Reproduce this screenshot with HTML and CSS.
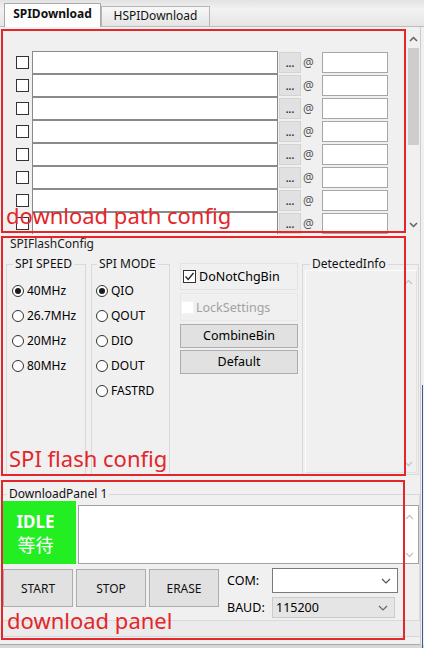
FILE: index.html
```html
<!DOCTYPE html>
<html>
<head>
<meta charset="utf-8">
<link rel="stylesheet" href="styles.css">
</head>
<body>
<div class="win">
  <div class="tabbar">
    <div class="tab active">SPIDownload</div>
    <div class="tab">HSPIDownload</div>
  </div>
  <div class="page">
    <section class="paths">
      <div class="pathlist">
        <div class="prow"><span class="cb"></span><span class="path"></span><span class="dots">...</span><span class="at">@</span><span class="addr"></span></div>
        <div class="prow"><span class="cb"></span><span class="path"></span><span class="dots">...</span><span class="at">@</span><span class="addr"></span></div>
        <div class="prow"><span class="cb"></span><span class="path"></span><span class="dots">...</span><span class="at">@</span><span class="addr"></span></div>
        <div class="prow"><span class="cb"></span><span class="path"></span><span class="dots">...</span><span class="at">@</span><span class="addr"></span></div>
        <div class="prow"><span class="cb"></span><span class="path"></span><span class="dots">...</span><span class="at">@</span><span class="addr"></span></div>
        <div class="prow"><span class="cb"></span><span class="path"></span><span class="dots">...</span><span class="at">@</span><span class="addr"></span></div>
        <div class="prow"><span class="cb"></span><span class="path"></span><span class="dots">...</span><span class="at">@</span><span class="addr"></span></div>
        <div class="prow"><span class="cb"></span><span class="path"></span><span class="dots">...</span><span class="at">@</span><span class="addr"></span></div>
      </div>
      <div class="vscroll">
        <div class="sbtn"><svg width="9" height="6" viewBox="0 0 9 6"><path d="M1 5 L4.5 1.5 L8 5" fill="none" stroke="#606060" stroke-width="1.5"/></svg></div>
        <div class="thumb"></div>
        <div class="track"></div>
        <div class="sbtn"><svg width="9" height="6" viewBox="0 0 9 6"><path d="M1 1 L4.5 4.5 L8 1" fill="none" stroke="#606060" stroke-width="1.5"/></svg></div>
      </div>
    </section>

    <section class="flash">
      <div class="flash-title">SPIFlashConfig</div>
      <div class="flash-body">
        <fieldset class="grp speed">
          <legend>SPI SPEED</legend>
          <div class="radios">
            <div class="ritem"><span class="rb on"></span><span>40MHz</span></div>
            <div class="ritem"><span class="rb"></span><span>26.7MHz</span></div>
            <div class="ritem"><span class="rb"></span><span>20MHz</span></div>
            <div class="ritem"><span class="rb"></span><span>80MHz</span></div>
          </div>
        </fieldset>
        <fieldset class="grp mode">
          <legend>SPI MODE</legend>
          <div class="radios">
            <div class="ritem"><span class="rb on"></span><span>QIO</span></div>
            <div class="ritem"><span class="rb"></span><span>QOUT</span></div>
            <div class="ritem"><span class="rb"></span><span>DIO</span></div>
            <div class="ritem"><span class="rb"></span><span>DOUT</span></div>
            <div class="ritem"><span class="rb"></span><span>FASTRD</span></div>
          </div>
        </fieldset>
        <div class="opts">
          <div class="panel">
            <span class="cb chk"><svg width="11" height="11" viewBox="0 0 11 11"><path d="M1.5 5.5 L4.2 8.5 L9.5 2" fill="none" stroke="#222" stroke-width="1.3"/></svg></span>
            <span class="plabel">DoNotChgBin</span>
          </div>
          <div class="panel dis">
            <span class="cb off"></span>
            <span class="plabel grey">LockSettings</span>
          </div>
          <div class="btn">CombineBin</div>
          <div class="btn second">Default</div>
        </div>
        <fieldset class="grp detected">
          <legend>DetectedInfo</legend>
          <div class="info">
            <div class="farrows">
              <svg width="9" height="6" viewBox="0 0 9 6"><path d="M1 5 L4.5 1.5 L8 5" fill="none" stroke="#c4c4c4" stroke-width="1.3"/></svg>
              <svg width="9" height="6" viewBox="0 0 9 6"><path d="M1 1 L4.5 4.5 L8 1" fill="none" stroke="#c4c4c4" stroke-width="1.3"/></svg>
            </div>
          </div>
        </fieldset>
      </div>
    </section>

    <section class="dl">
      <fieldset class="dlgrp">
        <legend>DownloadPanel 1</legend>
        <div class="dl-top">
          <div class="status"><span class="idle">IDLE</span><span class="wait">等待</span></div>
          <div class="log">
            <div class="farrows logar">
              <svg width="9" height="6" viewBox="0 0 9 6"><path d="M1 5 L4.5 1.5 L8 5" fill="none" stroke="#c4c4c4" stroke-width="1.3"/></svg>
              <svg width="9" height="6" viewBox="0 0 9 6"><path d="M1 1 L4.5 4.5 L8 1" fill="none" stroke="#c4c4c4" stroke-width="1.3"/></svg>
            </div>
          </div>
        </div>
        <div class="dl-bot">
          <div class="dbtn">START</div>
          <div class="dbtn">STOP</div>
          <div class="dbtn">ERASE</div>
          <div class="port">
            <span class="plab com-l">COM:</span>
            <div class="combo com"><span></span><svg width="10" height="6" viewBox="0 0 10 6"><path d="M1 1 L5 5 L9 1" fill="none" stroke="#555" stroke-width="1.2"/></svg></div>
            <span class="plab baud-l">BAUD:</span>
            <div class="combo baud"><span>115200</span><svg width="10" height="6" viewBox="0 0 10 6"><path d="M1 1 L5 5 L9 1" fill="none" stroke="#666" stroke-width="1.2"/></svg></div>
          </div>
        </div>
      </fieldset>
      <div class="band"></div>
    </section>
  </div>
  <div class="bottom"></div>

  <div class="anno a1"><span>download path config</span></div>
  <div class="anno a2"><span>SPI flash config</span></div>
  <div class="anno a3"><span>download panel</span></div>
  <div class="edge"></div>
</div>
</body>
</html>
```
FILE: styles.css
```css
* { box-sizing: border-box; }

body {
  margin: 0;
  background: #f0f0f0;
  font-family: "Noto Sans", "Noto Sans CJK SC", sans-serif;
  font-size: 12px;
  color: #000;
  width: 424px;
  height: 648px;
  overflow: hidden;
}

.win {
  position: relative;
  width: 424px;
  height: 648px;
}

/* tabs */
.tabbar {
  height: 27px;
  display: flex;
  align-items: flex-end;
  padding-left: 4px;
  background: linear-gradient(#e2e2e2, #f2f2f2 35%, #e5e5e5);
  border-bottom: 1px solid #bcbcbc;
}
.tab {
  width: 109px;
  height: 20px;
  text-align: center;
  line-height: 18px;
  border: 1px solid #b6b6b6;
  border-bottom: none;
  background: linear-gradient(#f8f8f8, #e4e4e4);
  color: #111;
}
.tab.active {
  width: 97px;
  height: 24px;
  line-height: 20px;
  background: #fdfdfd;
  border-color: #a9a9a9;
  font-weight: bold;
  margin-bottom: -1px;
}

.page {
  width: 421px;
  height: 618px;
  border-right: 1px solid #cdcdcd;
  border-bottom: 1px solid #a9a9a9;
}

/* path rows */
.paths {
  display: flex;
  height: 207px;
}
.pathlist {
  width: 406px;
  height: 207px;
  padding-top: 24px;
  overflow: hidden;
}
.prow {
  display: flex;
  align-items: center;
  height: 23px;
}
.cb {
  width: 13px;
  height: 13px;
  border: 1px solid #333;
  background: #fff;
  flex: none;
}
.prow .cb {
  margin-left: 16px;
  margin-right: 3px;
}
.path {
  width: 246px;
  height: 23px;
  border: 1px solid #8a8a8a;
  background: #fff;
}
.dots {
  width: 22px;
  height: 21px;
  margin-left: 1px;
  background: #e1e1e1;
  border: 1px solid #d3d3d3;
  font-size: 10px;
  font-weight: bold;
  color: #333;
  text-align: center;
  line-height: 20px;
}
.at {
  width: 21px;
  padding-left: 2px;
  color: #555;
  font-size: 12px;
}
.addr {
  width: 66px;
  height: 21px;
  border: 1px solid #a6a6a6;
  background: #fff;
}

.vscroll {
  width: 14px;
  margin-top: 3px;
  display: flex;
  flex-direction: column;
  align-items: center;
}
.sbtn {
  height: 18px;
  width: 14px;
  display: flex;
  align-items: center;
  justify-content: center;
}
.thumb {
  width: 11px;
  height: 97px;
  background: #cdcdcd;
}
.track { flex: 1; }

/* SPI flash config */
.flash {
  height: 244px;
  padding-top: 2px;
}
.flash-title {
  padding-left: 10px;
  height: 16px;
  line-height: 16px;
  color: #222;
}
.flash-body {
  display: flex;
  margin-top: 4px;
  height: 219px;
  padding-left: 6px;
}
.grp {
  margin: 0;
  padding: 0;
  min-width: 0;
  height: 219px;
  border: 1px solid #d9d9d9;
  flex: none;
}
.grp legend, .dlgrp legend {
  padding: 0 2px;
  margin-left: 6px;
  line-height: 16px;
  font-size: 12px;
  color: #111;
}
.speed { width: 80px; }
.mode { width: 79px; margin-left: 5px; }
.mode legend { margin-left: 5px; }
.radios { padding: 6px 0 0 5px; }
.mode .radios { padding-left: 4px; }
.ritem {
  display: flex;
  align-items: center;
  height: 25px;
  gap: 3px;
}
.rb {
  width: 12px;
  height: 12px;
  border: 1px solid #333;
  border-radius: 50%;
  background: #fff;
  display: flex;
  align-items: center;
  justify-content: center;
  flex: none;
}
.rb.on::after {
  content: "";
  width: 6px;
  height: 6px;
  border-radius: 50%;
  background: #1a1a1a;
}

.opts {
  width: 132px;
  padding: 7px 0 0 10px;
  flex: none;
}
.panel {
  width: 118px;
  height: 27px;
  border: 1px solid #e3e3e3;
  display: flex;
  align-items: center;
}
.panel .chk {
  margin-left: 2px;
  display: flex;
  align-items: center;
  justify-content: center;
}
.plabel {
  margin-left: 3px;
  font-size: 12.5px;
}
.panel.dis {
  height: 28px;
  margin-top: 3px;
  border-color: #e8e8e8;
}
.cb.off {
  border-color: #f4f4f4;
  margin-left: 0;
}
.plabel.grey {
  color: #a2a2a2;
  margin-left: 2px;
}
.btn {
  width: 118px;
  height: 24px;
  margin-top: 3px;
  border: 1px solid #adadad;
  background: #e1e1e1;
  text-align: center;
  line-height: 22px;
  font-size: 12.5px;
}
.btn.second { margin-top: 2px; }

.detected { width: 117px; }
.detected legend { margin-left: 7px; }
.info {
  margin: -2px 0 0 2px;
  width: 112px;
  height: 203px;
  border: 1px solid;
  border-color: #fcfcfc #e2e2e2 #e2e2e2 #fcfcfc;
  display: flex;
  justify-content: flex-end;
}
.farrows {
  width: 16px;
  display: flex;
  flex-direction: column;
  justify-content: space-between;
  align-items: center;
  padding: 8px 0 5px;
}

/* download panel */
.dl { height: 167px; }
.dlgrp {
  margin: 9px 0 0 2px;
  width: 418px;
  padding: 0 0 3px 0;
  min-width: 0;
  border: 1px solid #d9d9d9;
}
.dlgrp legend {
  margin-left: 4px;
  line-height: 14px;
}
.dl-top {
  display: flex;
  height: 63px;
}
.status {
  width: 73px;
  height: 63px;
  background: #22ee22;
  color: #fff;
  display: flex;
  flex-direction: column;
  align-items: center;
  justify-content: center;
  padding-right: 8px;
  flex: none;
}
.idle {
  font-weight: bold;
  font-size: 17px;
  line-height: 22px;
}
.wait {
  font-family: "Noto Sans CJK SC", sans-serif;
  font-size: 18px;
  line-height: 22px;
}
.log {
  flex: 1;
  margin: 4px 0 0 2px;
  background: #fff;
  border: 1px solid #a3a3a3;
  display: flex;
  justify-content: flex-end;
  padding-right: 1px;
}
.logar { padding: 8px 0 5px; }

.dl-bot {
  display: flex;
  margin-top: 4px;
  height: 49px;
  gap: 3px;
}
.dbtn {
  width: 70px;
  height: 38px;
  margin-top: 1px;
  border: 1px solid #adadad;
  background: #e1e1e1;
  display: flex;
  align-items: center;
  justify-content: center;
  color: #111;
}
.port {
  margin-left: 5px;
  display: grid;
  grid-template-columns: 45px auto;
  grid-template-rows: 25px 21px;
  row-gap: 4px;
  align-items: center;
}
.plab { font-size: 12.5px; }
.baud-l { margin-top: -1px; }
.combo {
  display: flex;
  align-items: center;
  justify-content: space-between;
}
.combo.com {
  width: 126px;
  height: 25px;
  border: 1px solid #7a7a7a;
  background: #fff;
  padding: 0 6px 0 3px;
}
.combo.baud {
  width: 123px;
  height: 21px;
  border: 1px solid #cbcbcb;
  background: #e5e5e5;
  padding: 0 6px 0 3px;
  font-size: 12.5px;
}
.band {
  height: 16px;
  background: #ebebeb;
  border-bottom: 1px solid #d6d6d6;
}
.bottom {
  height: 3px;
  background: #d8d8d8;
}

/* red annotation overlays */
.anno {
  position: absolute;
  border: 2px solid #e3262a;
  color: #e3262a;
  font-family: "Noto Sans", sans-serif;
  font-size: 22px;
  line-height: 22px;
  display: flex;
  align-items: flex-end;
  pointer-events: none;
}
.a1 { left: 1px; top: 29px; width: 405px; height: 204px; padding: 0 0 5px 3px; }
.a2 { left: 1px; top: 236px; width: 405px; height: 240px; padding: 0 0 5px 6px; }
.a3 { left: 1px; top: 480px; width: 404px; height: 160px; padding: 0 0 7px 4px; }

.edge {
  position: absolute;
  right: 1px;
  top: 385px;
  bottom: 0;
  width: 1px;
  background: #3b5c8e;
}
```
